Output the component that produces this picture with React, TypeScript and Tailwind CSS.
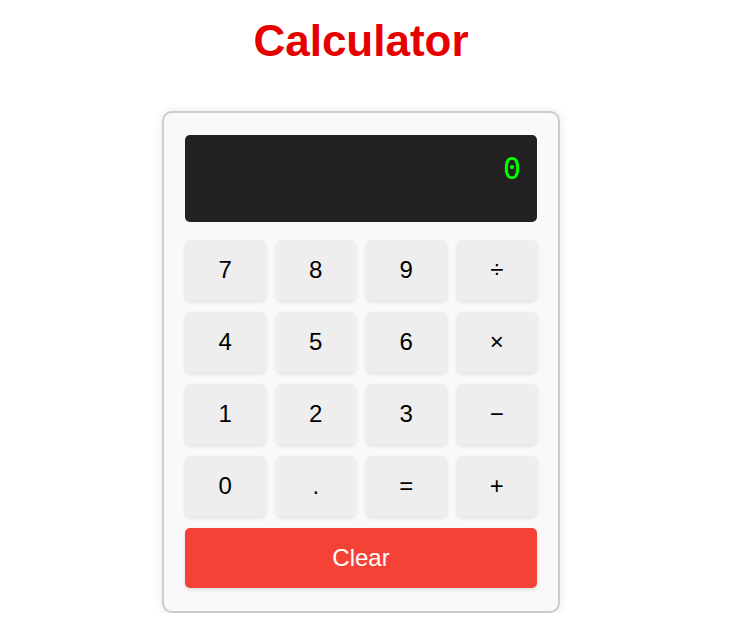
import React from "react";

const keys = ["7", "8", "9", "÷", "4", "5", "6", "×", "1", "2", "3", "−", "0", ".", "=", "+"];

export default function App() {
  return (
    <div className="w-[722px] flex flex-col items-center bg-white" style={{ fontFamily: '"Liberation Sans", Arial, sans-serif' }}>
      <h1 className="pt-[16px] text-[44px] leading-[normal] font-bold text-[#e60000]">Calculator</h1>
      <div className="mt-[45px] w-[398px] border-2 border-[#cccccc] rounded-[10px] bg-[#f9f9f9] px-[21px] pt-[22px] pb-[23px] shadow-[0_0_10px_rgba(0,0,0,0.1)]">
        <div
          className="h-[87px] bg-[#222222] rounded-[5px] pt-[16px] pr-[16px] text-right text-[30px] leading-[normal] text-[#00ff00]"
          style={{ fontFamily: '"DejaVu Sans Mono", monospace' }}
        >
          0
        </div>
        <div className="mt-[18px] grid grid-cols-4 gap-x-[10px] gap-y-[12px]">
          {keys.map((k) => (
            <button
              key={k}
              className="h-[60px] bg-[#eeeeee] rounded-[5px] text-[24px] text-black shadow-[0_2px_4px_rgba(0,0,0,0.1)] flex items-center justify-center"
            >
              {k}
            </button>
          ))}
        </div>
        <button className="mt-[12px] w-full h-[60px] bg-[#f44336] rounded-[5px] text-white text-[24px] shadow-[0_2px_4px_rgba(0,0,0,0.1)] flex items-center justify-center">
          Clear
        </button>
      </div>
    </div>
  );
}
